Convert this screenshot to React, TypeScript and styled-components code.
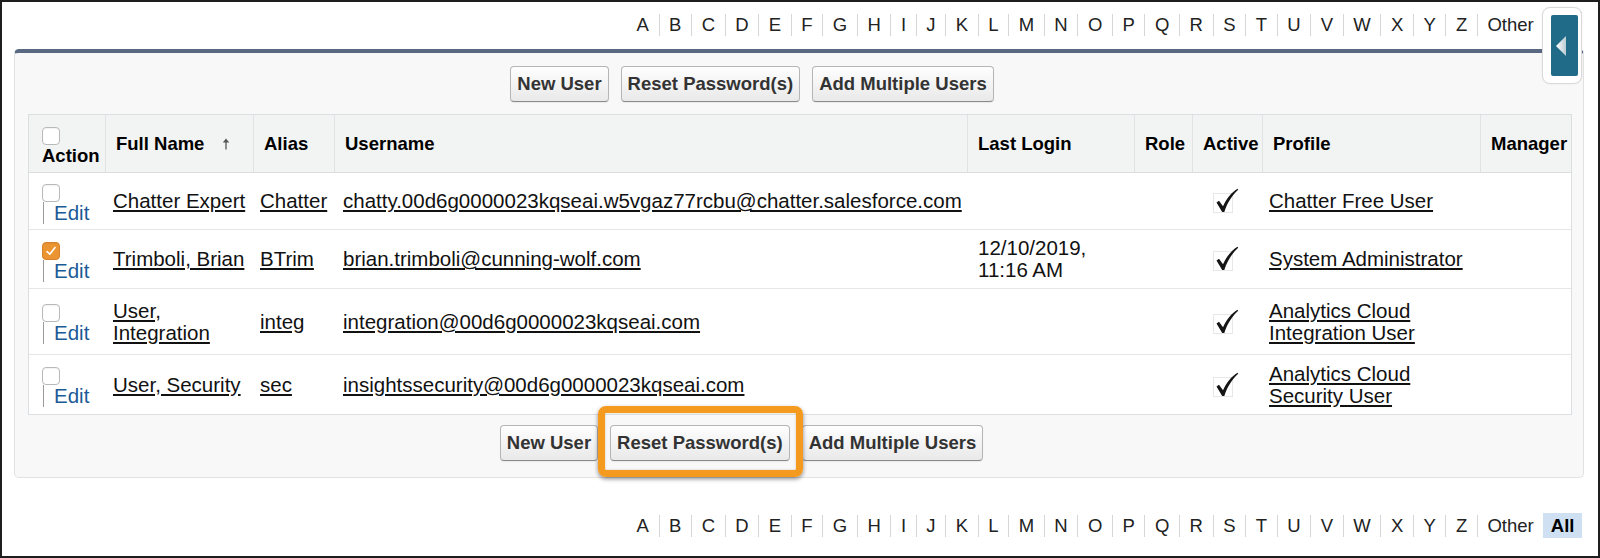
import React from "react";
import styled, { createGlobalStyle } from "styled-components";

const GlobalStyle = createGlobalStyle`
  html, body { margin: 0; padding: 0; background: #fff; }
  body { font-family: "Liberation Sans", Arial, Helvetica, sans-serif; color: #111; }
  *, *::before, *::after { box-sizing: border-box; }
`;

const FONT = `"Liberation Sans", Arial, Helvetica, sans-serif`;
const COLS = "76px 148px 81px 633px 167px 58px 70px 218px 93px";

const Frame = styled.div`
  position: relative;
  width: 1600px;
  height: 558px;
  border: 2px solid #1e1e1e;
  background: #fff;
  display: flex;
  flex-direction: column;
  overflow: hidden;
`;

const AlphaBar = styled.div<{ $top: number; $bottom: number }>`
  display: flex;
  justify-content: flex-end;
  align-items: center;
  height: ${(p) => p.$top + 25}px;
  padding: ${(p) => p.$top}px 16px 0 0;
  margin-bottom: ${(p) => p.$bottom}px;
  flex-shrink: 0;
`;

const AlphaItem = styled.span<{ $first?: boolean }>`
  height: 22px;
  line-height: 22px;
  font-size: 18.5px;
  color: #222;
  padding: 0 9.6px;
  border-left: ${(p) => (p.$first ? "none" : "1px solid #d6d6d6")};
`;

const AlphaAll = styled.span`
  height: 25px;
  line-height: 25px;
  font-size: 18.5px;
  font-weight: bold;
  color: #000;
  padding: 0 7.5px;
  background: #cfe0f3;
`;

const Handle = styled.div`
  position: absolute;
  top: 5px;
  right: 16px;
  width: 40px;
  height: 77px;
  background: #fff;
  border: 1px solid #d9d9d9;
  border-radius: 8px;
  padding: 7px 3px 7px 8px;
  box-shadow: 0 0 2px rgba(0, 0, 0, 0.08);
`;

const HandleTab = styled.div`
  width: 100%;
  height: 100%;
  background: #1f6b88;
  border-radius: 2px;
  display: flex;
  align-items: center;
  padding-left: 5px;
`;

const Panel = styled.section`
  margin: 0 14px 0 12px;
  height: 429px;
  background: #f8f8f8;
  border: 1px solid #e2e2e2;
  border-top: 4px solid #5a6982;
  border-radius: 5px;
  padding: 13px 11px 16px 13px;
  display: flex;
  flex-direction: column;
  flex-shrink: 0;
`;

const ButtonRow = styled.div<{ $shift: number }>`
  display: flex;
  justify-content: center;
  align-items: center;
  gap: 12px;
  padding-right: ${(p) => p.$shift}px;
`;

const Btn = styled.button`
  height: 36px;
  padding: 0 6px;
  font-family: ${FONT};
  font-weight: bold;
  font-size: 18.5px;
  color: #333;
  white-space: nowrap;
  background: linear-gradient(#fefefe, #e9e9e9);
  border: 1px solid #b5b5b5;
  border-bottom-color: #8a8a8a;
  border-radius: 4px;
  box-shadow: 0 1px 1px rgba(0, 0, 0, 0.06);
`;

const Highlight = styled.div`
  position: relative;
  display: inline-flex;
  &::after {
    content: "";
    position: absolute;
    top: -19px;
    left: -12px;
    right: -13px;
    bottom: -16px;
    border: 7px solid #f39a1f;
    border-radius: 8px;
    box-shadow: 0 2px 4px rgba(0, 0, 0, 0.45), inset 0 0 2px rgba(120, 60, 0, 0.3);
    pointer-events: none;
  }
`;

const Table = styled.div`
  margin: 12px 0 10px;
  border: 1px solid #dcdfe1;
  background: #fff;
`;

const Row = styled.div<{ $h: number; $head?: boolean }>`
  display: grid;
  grid-template-columns: ${COLS};
  height: ${(p) => p.$h}px;
  background: ${(p) => (p.$head ? "#f2f3f3" : "#fff")};
  border-bottom: 1px solid ${(p) => (p.$head ? "#dcdcdc" : "#e6e6e6")};
  &:last-child {
    border-bottom: none;
  }
`;

const HeadCell = styled.div`
  display: flex;
  align-items: center;
  padding: 0 10px;
  font-weight: bold;
  font-size: 18.5px;
  color: #000;
  border-left: 1px solid #e0e2e4;
  white-space: nowrap;
  &:first-child {
    border-left: none;
  }
`;

const ActionHead = styled(HeadCell)`
  flex-direction: column;
  align-items: flex-start;
  justify-content: center;
  padding: 6px 0 0 13px;
  line-height: 22px;
`;

const Cell = styled.div<{ $pad?: number }>`
  display: flex;
  flex-direction: column;
  justify-content: center;
  align-items: flex-start;
  padding: 0 0 0 ${(p) => (p.$pad ?? 8)}px;
  font-size: 20.5px;
  line-height: 22px;
  color: #111;
  white-space: nowrap;
`;

const ActionCell = styled(Cell)`
  padding: 5px 0 0 13px;
`;

const EditLine = styled.div`
  display: flex;
  align-items: center;
  height: 22px;
  &::before {
    content: "";
    width: 1px;
    height: 22px;
    background: #9a9a9a;
    margin: 0 10px 0 1px;
  }
`;

const EditLink = styled.a`
  color: #1a5a96;
  font-size: 20.5px;
  text-decoration: none;
`;

const Link = styled.a`
  color: #111;
  text-decoration: underline;
  text-underline-offset: 2px;
`;

const Box = styled.span<{ $checked?: boolean }>`
  display: inline-flex;
  align-items: center;
  justify-content: center;
  width: 18px;
  height: 18px;
  border-radius: 4px;
  border: 1px solid ${(p) => (p.$checked ? "#d9822b" : "#b9b9b9")};
  background: ${(p) => (p.$checked ? "#eb9532" : "#fff")};
  box-shadow: inset 0 1px 1px rgba(0, 0, 0, 0.05);
  flex-shrink: 0;
`;

const SortArrow = styled.svg`
  margin-left: 18px;
`;

const Checkbox = ({ checked }: { checked?: boolean }) => (
  <Box $checked={checked}>
    {checked && (
      <svg width="12" height="12" viewBox="0 0 12 12">
        <path d="M2 6.5 L4.8 9.2 L10 2.5" fill="none" stroke="#fff" strokeWidth="1.6" strokeLinecap="round" strokeLinejoin="round" />
      </svg>
    )}
  </Box>
);

const ActiveCheck = () => (
  <svg width="26" height="26" viewBox="0 0 26 26">
    <rect x="0.5" y="5.5" width="19" height="19" fill="none" stroke="#cfcfcf" strokeWidth="1" strokeDasharray="1 1" />
    <path d="M3.5 14.5 L6 12.8 L10 18.3 C13.5 10.5 18.5 4.5 24.5 0.8 L25.2 1.7 C19.5 7 14.5 14 11.3 24 L9.2 24 Z" fill="#151515" />
  </svg>
);

type UserRow = {
  h: number;
  checked?: boolean;
  name: string[];
  alias: string;
  user: string;
  login: string[];
  profile: string[];
};

const rows: UserRow[] = [
  {
    h: 57,
    name: ["Chatter Expert"],
    alias: "Chatter",
    user: "chatty.00d6g0000023kqseai.w5vgaz77rcbu@chatter.salesforce.com",
    login: [],
    profile: ["Chatter Free User"],
  },
  {
    h: 59,
    checked: true,
    name: ["Trimboli, Brian"],
    alias: "BTrim",
    user: "brian.trimboli@cunning-wolf.com",
    login: ["12/10/2019,", "11:16 AM"],
    profile: ["System Administrator"],
  },
  {
    h: 66,
    name: ["User,", "Integration"],
    alias: "integ",
    user: "integration@00d6g0000023kqseai.com",
    login: [],
    profile: ["Analytics Cloud", "Integration User"],
  },
  {
    h: 59,
    name: ["User, Security"],
    alias: "sec",
    user: "insightssecurity@00d6g0000023kqseai.com",
    login: [],
    profile: ["Analytics Cloud", "Security User"],
  },
];

const letters = "ABCDEFGHIJKLMNOPQRSTUVWXYZ".split("").concat(["Other"]);

const Lines = ({ lines }: { lines: string[] }) => (
  <>
    {lines.map((l, i) => (
      <React.Fragment key={i}>
        {i > 0 && <br />}
        {l}
      </React.Fragment>
    ))}
  </>
);

const Alphabet = ({ top, bottom }: { top: number; bottom: number }) => (
  <AlphaBar $top={top} $bottom={bottom}>
    {letters.map((l, i) => (
      <AlphaItem key={l} $first={i === 0}>
        {l}
      </AlphaItem>
    ))}
    <AlphaAll>All</AlphaAll>
  </AlphaBar>
);

export default function App() {
  return (
    <>
      <GlobalStyle />
      <Frame>
        <Alphabet top={10} bottom={12} />
        <Handle>
          <HandleTab>
            <svg width="10" height="20" viewBox="0 0 10 20">
              <defs>
                <linearGradient id="tri" x1="0" y1="0" x2="1" y2="0">
                  <stop offset="0" stopColor="#ffffff" />
                  <stop offset="1" stopColor="#b9cbd2" />
                </linearGradient>
              </defs>
              <polygon points="0,10 10,0 10,20" fill="url(#tri)" />
            </svg>
          </HandleTab>
        </Handle>
        <Panel>
          <ButtonRow $shift={96}>
            <Btn>New User</Btn>
            <Btn>Reset Password(s)</Btn>
            <Btn>Add Multiple Users</Btn>
          </ButtonRow>
          <Table>
            <Row $h={58} $head>
              <ActionHead>
                <Checkbox />
                <span>Action</span>
              </ActionHead>
              <HeadCell>
                Full Name
                <SortArrow width="8" height="12" viewBox="0 0 8 12">
                  <path d="M4 11.5 V3" stroke="#555" strokeWidth="1.3" />
                  <polygon points="0.8,4.5 4,0.5 7.2,4.5" fill="#555" />
                </SortArrow>
              </HeadCell>
              <HeadCell>Alias</HeadCell>
              <HeadCell>Username</HeadCell>
              <HeadCell>Last Login</HeadCell>
              <HeadCell>Role</HeadCell>
              <HeadCell>Active</HeadCell>
              <HeadCell>Profile</HeadCell>
              <HeadCell>Manager</HeadCell>
            </Row>
            {rows.map((r, i) => (
              <Row key={i} $h={r.h}>
                <ActionCell>
                  <Checkbox checked={r.checked} />
                  <EditLine>
                    <EditLink>Edit</EditLink>
                  </EditLine>
                </ActionCell>
                <Cell>
                  <Link>
                    <Lines lines={r.name} />
                  </Link>
                </Cell>
                <Cell $pad={7}>
                  <Link>{r.alias}</Link>
                </Cell>
                <Cell $pad={9}>
                  <Link>{r.user}</Link>
                </Cell>
                <Cell $pad={11}>
                  <span>
                    <Lines lines={r.login} />
                  </span>
                </Cell>
                <Cell />
                <Cell $pad={21}>
                  <ActiveCheck />
                </Cell>
                <Cell $pad={7}>
                  <Link>
                    <Lines lines={r.profile} />
                  </Link>
                </Cell>
                <Cell />
              </Row>
            ))}
          </Table>
          <ButtonRow $shift={117}>
            <Btn>New User</Btn>
            <Highlight>
              <Btn>Reset Password(s)</Btn>
            </Highlight>
            <Btn>Add Multiple Users</Btn>
          </ButtonRow>
        </Panel>
        <Alphabet top={35} bottom={0} />
      </Frame>
    </>
  );
}
